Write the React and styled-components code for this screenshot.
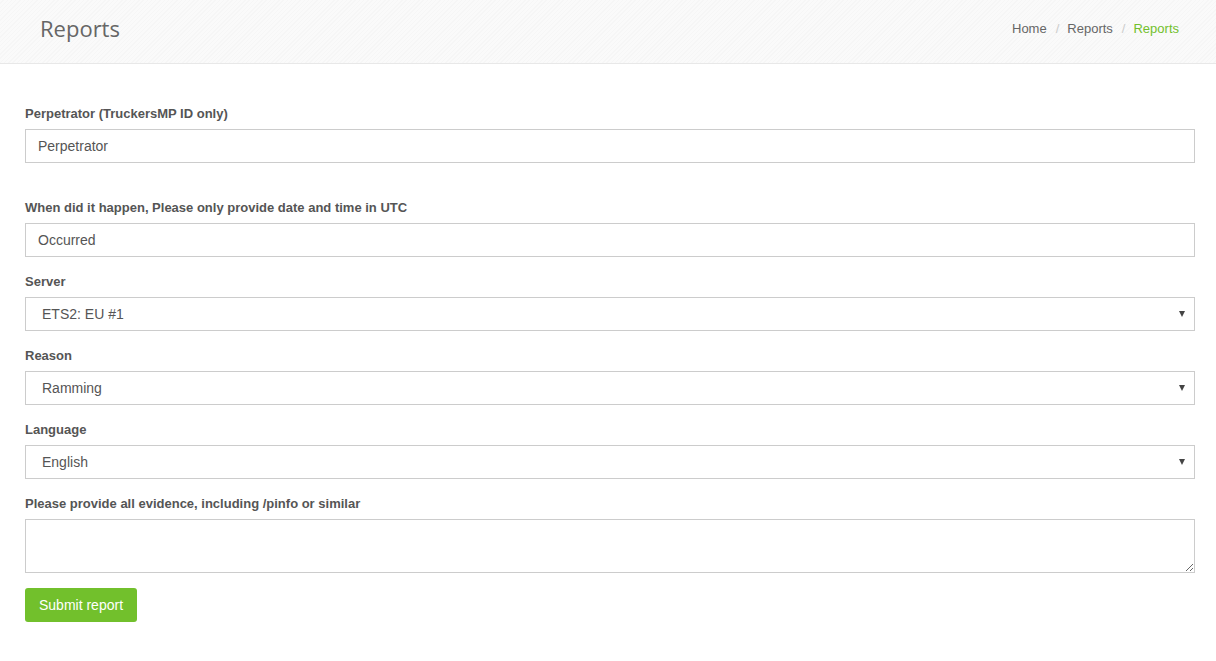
import React from "react";
import styled, { createGlobalStyle } from "styled-components";

const GlobalStyle = createGlobalStyle`
  body {
    margin: 0;
    background: #fff;
    font-family: "Liberation Sans", Arial, sans-serif;
    font-size: 14px;
    color: #555;
  }
`;

//Start Styles

const Header = styled.div`
  height: 63px;
  border-bottom: 1px solid #e8e8e8;
  background: repeating-linear-gradient(
    135deg,
    #fafafa 0px,
    #fafafa 2px,
    #f6f6f6 2px,
    #f6f6f6 3px
  );
`;

const Container = styled.div`
  width: 1170px;
  margin-left: 25px;
  box-sizing: border-box;
  padding: ${({ padded }) => (padded ? "0 16px 0 15px" : "0")};
`;

const HeaderRow = styled(Container)`
  height: 63px;
  display: flex;
  align-items: center;
  justify-content: space-between;
  padding-bottom: 8px;
`;

const Title = styled.h1`
  margin: 0;
  font-family: "Open Sans", sans-serif;
  font-size: 22px;
  font-weight: 400;
  color: #666;
`;

const Crumbs = styled.ul`
  display: flex;
  list-style: none;
  margin: 2px 0 0;
  padding: 0;
  font-size: 13px;
`;

const Crumb = styled.li`
  color: ${({ active }) => (active ? "#72c02c" : "#666")};
  &:not(:first-child)::before {
    content: "/";
    color: #ccc;
    padding: 0 8px 0 9px;
  }
`;

const Form = styled(Container).attrs({ as: "form" })`
  padding-top: 39px;
`;

const Group = styled.div`
  margin-bottom: ${({ gap }) => gap || "14px"};
`;

const Label = styled.label`
  display: block;
  font-size: 13px;
  font-weight: 700;
  line-height: 20px;
  padding-top: 1px;
  margin-bottom: 5px;
  color: #555;
`;

const Input = styled.input`
  display: block;
  width: 100%;
  height: 34px;
  box-sizing: border-box;
  border: 1px solid #ccc;
  padding: 0 12px;
  font-family: "Liberation Sans", Arial, sans-serif;
  font-size: 14px;
  color: #555;
  outline: none;
  &::placeholder {
    color: #555;
    opacity: 1;
  }
`;

const SelectWrap = styled.div`
  position: relative;
`;

const Select = styled.select`
  display: block;
  width: 100%;
  height: 34px;
  box-sizing: border-box;
  border: 1px solid #ccc;
  border-radius: 0;
  padding: 0 16px;
  background: #fff;
  appearance: none;
  font-family: "Liberation Sans", Arial, sans-serif;
  font-size: 14px;
  color: #555;
  outline: none;
`;

const Caret = styled.span`
  position: absolute;
  right: 10px;
  top: 14px;
  width: 0;
  height: 0;
  border-left: 3px solid transparent;
  border-right: 3px solid transparent;
  border-top: 6px solid #444;
  pointer-events: none;
`;

const TextArea = styled.textarea`
  display: block;
  width: 100%;
  height: 54px;
  box-sizing: border-box;
  border: 1px solid #ccc;
  padding: 6px 12px;
  font-family: "Liberation Sans", Arial, sans-serif;
  font-size: 14px;
  color: #555;
  outline: none;
`;

const Button = styled.button`
  height: 34px;
  padding: 0 14px;
  border: none;
  border-radius: 3px;
  background: #72c02c;
  color: #fff;
  font-family: "Liberation Sans", Arial, sans-serif;
  font-size: 14px;
  cursor: pointer;
`;

//End Styles

const SelectField = ({ label, value }) => (
  <Group>
    <Label>{label}</Label>
    <SelectWrap>
      <Select defaultValue={value}>
        <option>{value}</option>
      </Select>
      <Caret />
    </SelectWrap>
  </Group>
);

const App = () => {
  return (
    <>
      <GlobalStyle />
      <Header>
        <HeaderRow padded>
          <Title>Reports</Title>
          <Crumbs>
            <Crumb>Home</Crumb>
            <Crumb>Reports</Crumb>
            <Crumb active>Reports</Crumb>
          </Crumbs>
        </HeaderRow>
      </Header>
      <Form>
        <Group gap="34px">
          <Label>Perpetrator (TruckersMP ID only)</Label>
          <Input placeholder="Perpetrator" />
        </Group>
        <Group>
          <Label>When did it happen, Please only provide date and time in UTC</Label>
          <Input placeholder="Occurred" />
        </Group>
        <SelectField label="Server" value="ETS2: EU #1" />
        <SelectField label="Reason" value="Ramming" />
        <SelectField label="Language" value="English" />
        <Group gap="15px">
          <Label>Please provide all evidence, including /pinfo or similar</Label>
          <TextArea />
        </Group>
        <Button type="button">Submit report</Button>
      </Form>
    </>
  );
};

export default App;
